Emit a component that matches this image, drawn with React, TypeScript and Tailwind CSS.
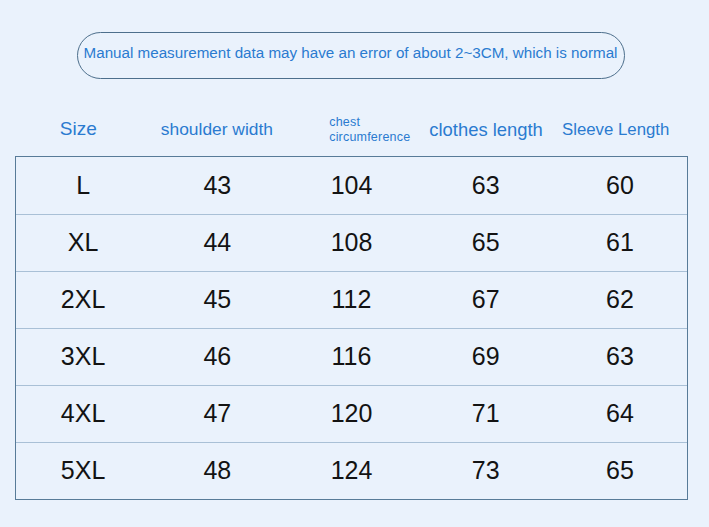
const rows = [
  ["L", "43", "104", "63", "60"],
  ["XL", "44", "108", "65", "61"],
  ["2XL", "45", "112", "67", "62"],
  ["3XL", "46", "116", "69", "63"],
  ["4XL", "47", "120", "71", "64"],
  ["5XL", "48", "124", "73", "65"],
];

export default function App() {
  return (
    <div className="w-[709px] h-[527px] bg-[#eaf2fc] font-['Liberation_Sans',Arial,sans-serif] overflow-hidden">
      <div className="pt-[32px] flex justify-center">
        <div className="w-[548px] h-[47px] ml-[-8px] rounded-full border border-[#4d6f8c] flex items-center justify-center pb-[5px]">
          <p className="text-[15.2px] text-[#2a7bd0] whitespace-nowrap">
            Manual measurement data may have an error of about 2~3CM, which is normal
          </p>
        </div>
      </div>

      <div className="mx-[15px] mt-[30px] w-[673px]">
        <div className="grid grid-cols-5 h-[47px] items-center text-[#2a7bd0] pb-[6px]">
          <div className="text-center text-[19px] pr-[8px]">Size</div>
          <div className="text-center text-[17.4px]">shoulder width</div>
          <p className="text-[12.5px] leading-[14.5px] pl-[45px] tracking-[0.2px]">
            chest
            <br />
            circumference
          </p>
          <div className="text-center text-[18.4px]">clothes length</div>
          <div className="text-center text-[16.8px] pr-[10px]">Sleeve Length</div>
        </div>

        <div className="border border-[#587b98]">
          {rows.map((r, i) => (
            <div
              key={r[0]}
              className={`grid grid-cols-5 h-[57px] items-center text-[25px] text-[#131313] ${
                i > 0 ? "border-t border-[#a9c0d6]" : ""
              }`}
            >
              {r.map((c, j) => (
                <div key={j} className="text-center">
                  {c}
                </div>
              ))}
            </div>
          ))}
        </div>
      </div>
    </div>
  );
}
